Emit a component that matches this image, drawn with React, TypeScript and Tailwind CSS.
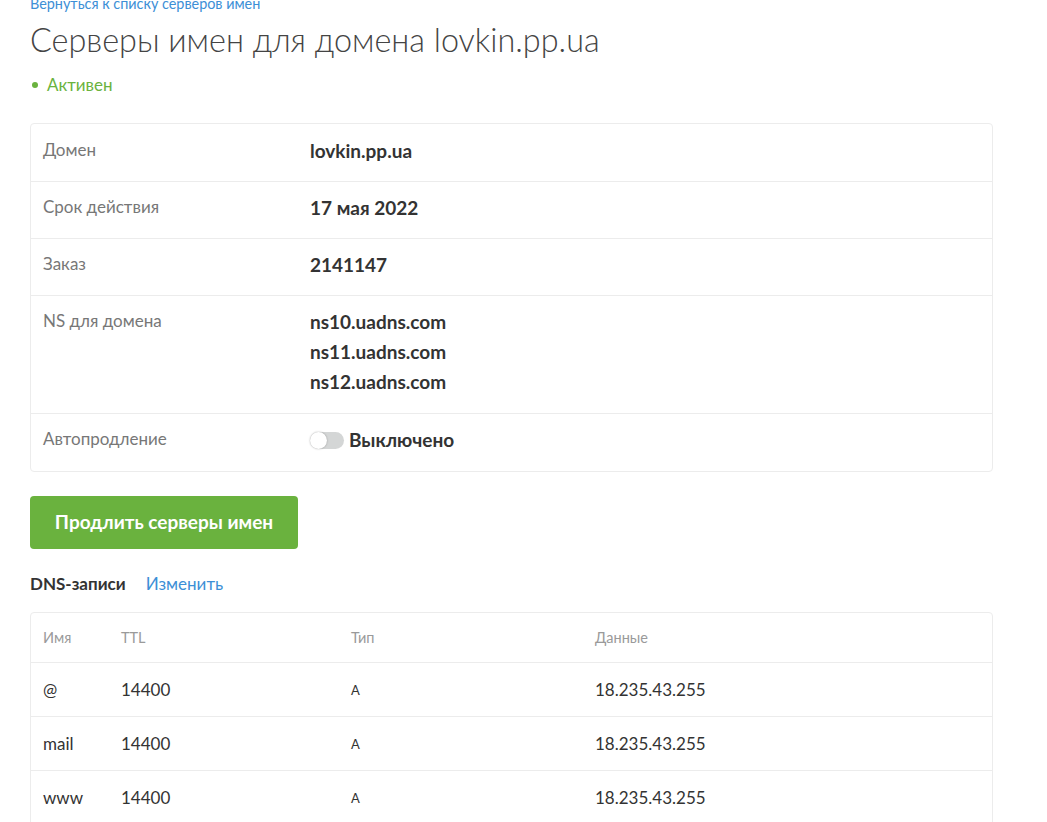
import React from "react";

const rows = [
  { label: "Домен", value: ["lovkin.pp.ua"] },
  { label: "Срок действия", value: ["17 мая 2022"] },
  { label: "Заказ", value: ["2141147"] },
  { label: "NS для домена", value: ["ns10.uadns.com", "ns11.uadns.com", "ns12.uadns.com"] },
];

const records = [
  { name: "@", ttl: "14400", type: "A", data: "18.235.43.255" },
  { name: "mail", ttl: "14400", type: "A", data: "18.235.43.255" },
  { name: "www", ttl: "14400", type: "A", data: "18.235.43.255" },
];

export default function App() {
  return (
    <div className="min-h-screen bg-white font-['Lato','Open_Sans',sans-serif] text-[#333]">
      <div className="w-[963px] ml-[30px] -mt-[4px]">
        <a className="block text-[14.4px] leading-[16px] text-[#3d8fd6]">
          Вернуться к списку серверов имен
        </a>
        <h1 className="mt-[8px] text-[32.4px] leading-[40px] font-light text-[#444]">
          Серверы имен для домена lovkin.pp.ua
        </h1>
        <div className="mt-[15px] flex items-center gap-[9px] pl-[2px] text-[17px] leading-[20px] text-[#6ab23e]">
          <span className="w-[6px] h-[6px] rounded-full bg-[#6ab23e]" />
          <span>Активен</span>
        </div>

        <div className="mt-[28px] border border-[#ececec] rounded-[4px]">
          {rows.map((row, i) => (
            <div
              key={row.label}
              className={`flex border-b border-[#ececec] ${i === 0 ? "pt-[16px]" : "pt-[15px]"} ${
                row.value.length > 1 ? "pb-[19px]" : "pb-[18px]"
              }`}
            >
              <div className="w-[279px] pl-[12px] text-[17px] leading-[20px] text-[#777]">{row.label}</div>
              <div className="flex flex-col gap-[6px] text-[19px] leading-[24px] font-bold text-[#333] -mt-[1px]">
                {row.value.map((v) => (
                  <span key={v}>{v}</span>
                ))}
              </div>
            </div>
          ))}
          <div className="flex pt-[15px] pb-[19px]">
            <div className="w-[279px] pl-[12px] text-[17px] leading-[20px] text-[#777]">Автопродление</div>
            <div className="flex items-center gap-[5px] h-[24px] -mt-[1px]">
              <span className="relative w-[34px] h-[17px] rounded-full bg-[#d4d6d6]">
                <span className="absolute left-0 top-0 w-[17px] h-[17px] rounded-full bg-white shadow-[0_0_2px_rgba(0,0,0,0.3)]" />
              </span>
              <span className="text-[19px] leading-[24px] font-bold text-[#333]">Выключено</span>
            </div>
          </div>
        </div>

        <button className="mt-[24px] w-[268px] h-[53px] rounded-[4px] bg-[#6ab23e] text-white text-[19px] font-bold">
          Продлить серверы имен
        </button>

        <div className="mt-[25px] flex items-baseline gap-[20px] text-[17px] leading-[20px]">
          <span className="font-bold text-[#333]">DNS-записи</span>
          <span className="text-[#3d8fd6]">Изменить</span>
        </div>

        <div className="mt-[18px] border border-[#ececec] rounded-[4px]">
          <div className="flex h-[50px] items-center border-b border-[#ececec] text-[14.5px] text-[#9a9a9a]">
            <div className="w-[90px] pl-[12px]">Имя</div>
            <div className="w-[230px]">TTL</div>
            <div className="w-[244px]">Тип</div>
            <div>Данные</div>
          </div>
          {records.map((r) => (
            <div key={r.name} className="flex h-[54px] items-center border-b border-[#ececec] text-[17px] text-[#333]">
              <div className="w-[90px] pl-[12px]">{r.name}</div>
              <div className="w-[230px]">{r.ttl}</div>
              <div className="w-[244px] text-[13px] pt-[3px]">{r.type}</div>
              <div>{r.data}</div>
            </div>
          ))}
        </div>
      </div>
    </div>
  );
}
